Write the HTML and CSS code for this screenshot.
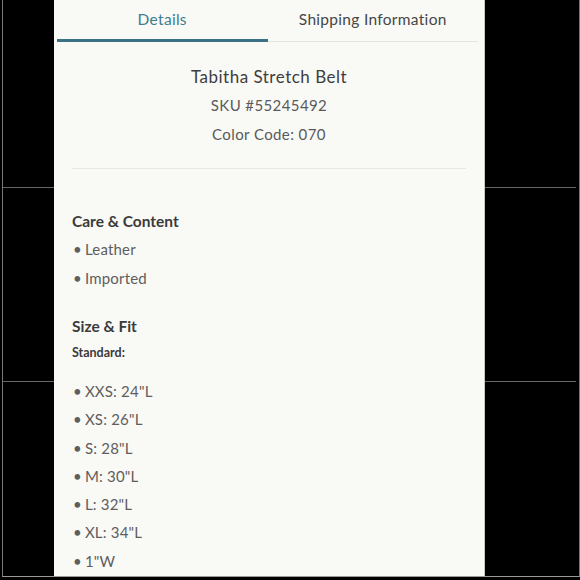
FILE: index.html
```html
<!DOCTYPE html>
<html lang="en">
<head>
    <meta charset="UTF-8">
    <meta name="viewport" content="width=device-width, initial-scale=1.0">
    <title>Tabitha Stretch Belt</title>
    <link rel="stylesheet" href="styles.css">
</head>
<body>
    <div class="frame">
        <!-- 左邊黑色區塊 -->
        <div class="side">
            <div class="side-part"></div>
            <div class="side-part"></div>
            <div class="side-part last"></div>
        </div>

        <!-- 商品資訊面板 -->
        <div class="panel">
            <div class="tabs">
                <div class="tab active">Details</div>
                <div class="tab">Shipping Information</div>
            </div>

            <div class="product">
                <div class="product-name">Tabitha Stretch Belt</div>
                <div class="product-line">SKU #55245492</div>
                <div class="product-line">Color Code: 070</div>
            </div>

            <div class="details">
                <h3 class="section-title">Care &amp; Content</h3>
                <ul class="bullets">
                    <li>Leather</li>
                    <li>Imported</li>
                </ul>

                <h3 class="section-title fit">Size &amp; Fit</h3>
                <div class="sub-title">Standard:</div>
                <ul class="bullets sizes">
                    <li>XXS: 24"L</li>
                    <li>XS: 26"L</li>
                    <li>S: 28"L</li>
                    <li>M: 30"L</li>
                    <li>L: 32"L</li>
                    <li>XL: 34"L</li>
                    <li>1"W</li>
                </ul>
            </div>
        </div>

        <!-- 右邊黑色區塊 -->
        <div class="side right">
            <div class="side-part"></div>
            <div class="side-part"></div>
            <div class="side-part last"></div>
        </div>
    </div>
</body>
</html>
```

FILE: styles.css
```css
/* 基本樣式 */
body {
    margin: 0;
    background-color: #000;
    font-family: Lato, "Open Sans", sans-serif;
}

.frame {
    display: flex;
    width: 576px;
    height: 576px;
    margin-left: 2px;
    border-left: 1px solid #777;
    border-right: 1px solid #777;
    border-bottom: 1px solid #999;
    overflow: hidden;
}

.side {
    width: 51px;
    display: flex;
    flex-direction: column;
}

.side.right {
    width: 91px;
}

.side-part {
    height: 187px;
    border-bottom: 1px solid #666;
}

.side-part:nth-child(2) {
    height: 193px;
}

.side-part.last {
    flex: 1;
    border-bottom: none;
}

/* 面板 */
.panel {
    width: 430px;
    background-color: #f9f9f6;
    border-right: 1px solid #c8c8c4;
}

.tabs {
    display: flex;
    margin: 0 6px 0 3px;
}

.tab {
    flex: 1;
    height: 42px;
    line-height: 38px;
    text-align: center;
    font-size: 15.5px;
    color: #474747;
    letter-spacing: 0.3px;
    border-bottom: 1px solid #e3e3e0;
    box-sizing: border-box;
}

.tab.active {
    color: #3d7d8e;
    border-bottom: 3px solid #3a7184;
}

.product {
    margin: 0 18px;
    padding: 20px 0 19px;
    text-align: center;
    border-bottom: 1px solid #e6e6e2;
}

.product-name {
    font-size: 17px;
    line-height: 29px;
    color: #3e3e3e;
    letter-spacing: 0.5px;
}

.product-line {
    font-size: 15px;
    line-height: 29px;
    color: #5a5a5a;
    letter-spacing: 0.4px;
}

.details {
    padding: 38px 18px 0;
}

.section-title {
    margin: 0;
    font-size: 15.5px;
    font-weight: bold;
    line-height: 28px;
    color: #3b3b3b;
}

.section-title.fit {
    margin-top: 20px;
}

.sub-title {
    font-size: 12.5px;
    font-weight: bold;
    line-height: 26px;
    color: #3b3b3b;
}

.bullets {
    list-style: none;
    margin: 0;
    padding: 0;
}

.bullets li {
    font-size: 15px;
    line-height: 28.5px;
    color: #5e5e5e;
    letter-spacing: 0.2px;
}

.bullets li::before {
    content: "•";
    margin: 0 3px 0 1px;
}

.sizes {
    margin-top: 11px;
}

.sizes li {
    line-height: 28.3px;
}
```
